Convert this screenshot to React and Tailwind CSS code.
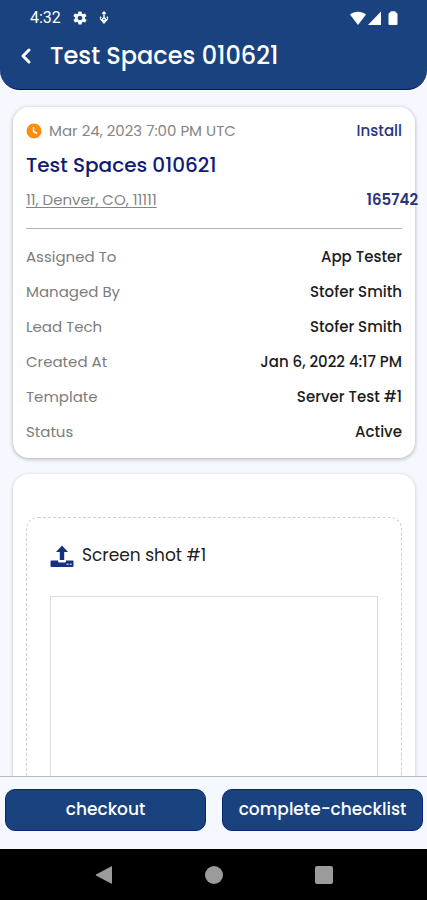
import { ChevronLeft } from 'lucide-react';
import { IoMdSettings } from 'react-icons/io';

const details = [
    { label: 'Assigned To', value: 'App Tester' },
    { label: 'Managed By', value: 'Stofer Smith' },
    { label: 'Lead Tech', value: 'Stofer Smith' },
    { label: 'Created At', value: 'Jan 6, 2022 4:17 PM' },
    { label: 'Template', value: 'Server Test #1' },
    { label: 'Status', value: 'Active' },
];

function StatusBar() {
    return (
        <div className="flex h-9 items-center justify-between pl-[30px] pr-7 font-['Roboto',sans-serif]">
            <div className="flex items-center">
                <span className="text-base">4:32</span>
                <IoMdSettings className="ml-[11px] size-4" />
                <svg className="ml-[10px] h-4 w-3" viewBox="0 0 12 16" fill="none" stroke="currentColor" strokeWidth="1.4">
                    <path d="M6 2v6M4.3 3.7L6 2l1.700 1.700" />
                    <circle cx="6" cy="9.500" r="1.500" />
                    <path d="M2 6.800l1.300 1M10 6.800l-1.300 1M2.200 8.500L6 13l3.800-4.500" />
                </svg>
            </div>
            <div className="flex items-center">
                <svg className="h-4 w-[18px]" viewBox="0 0 18 16" fill="currentColor">
                    <path d="M1 4.5C3.3 2.6 6 1.7 9 1.7s5.7.9 8 2.8L9 15z" />
                </svg>
                <svg className="h-4 w-4" viewBox="0 0 16 16" fill="currentColor">
                    <path d="M14 1.5V15H1z" />
                </svg>
                <svg className="ml-1 h-4 w-3" viewBox="0 0 12 16" fill="currentColor">
                    <path d="M4 1.2h4l2.500 2.600V14a1 1 0 0 1-1 1h-7a1 1 0 0 1-1-1V3.800z" />
                </svg>
            </div>
        </div>
    );
}

function Header() {
    return (
        <header className="h-[90px] shrink-0 rounded-b-[20px] border-b border-[#07107a] bg-[#1a427f] text-white">
            <StatusBar />
            <div className="flex h-10 items-center pl-3">
                <button type="button" aria-label="Back" className="flex size-7 items-center justify-center">
                    <ChevronLeft className="size-6" strokeWidth={3} />
                </button>
                <h1 className="ml-[10px] text-2xl font-medium">Test Spaces 010621</h1>
            </div>
        </header>
    );
}

function JobCard() {
    return (
        <section className="rounded-2xl bg-white px-[13px] pt-3 pb-[14px] text-[15px] leading-6 shadow-[0_1px_4px_rgba(0,0,0,0.3)]">
            <div className="flex items-center justify-between">
                <div className="flex items-center gap-[7px] text-[#858585]">
                    <svg className="size-4" viewBox="0 0 16 16" fill="none">
                        <circle cx="8" cy="8" r="7.5" fill="#fb8c0d" />
                        <path d="M7.5 4v4.5l3.5 2" stroke="white" strokeWidth="1.5" />
                    </svg>
                    <span>Mar 24, 2023 7:00 PM UTC</span>
                </div>
                <span className="font-medium text-[#2a3580]">Install</span>
            </div>
            <h2 className="mt-[10px] text-xl leading-6 font-medium text-[#101c72]">Test Spaces 010621</h2>
            <div className="-mr-4 mt-[11px] flex items-center justify-between">
                <a href="#" className="text-[#858585] underline underline-offset-2">11, Denver, CO, 11111</a>
                <span className="font-semibold text-[#2a3580]">165742</span>
            </div>
            <hr className="mt-4 border-[#b5b5b5]" />
            <dl className="mt-4 flex flex-col gap-[11px]">
                {details.map((item) => (
                    <div key={item.label} className="flex justify-between">
                        <dt className="text-[#7c7c7c]">{item.label}</dt>
                        <dd className="font-medium text-[#1c1c1c]">{item.value}</dd>
                    </div>
                ))}
            </dl>
        </section>
    );
}

function UploadIcon() {
    return (
        <svg className="size-6" viewBox="0 0 24 24" fill="#14307e">
            <path d="M12 1.500l6 6.500h-3.800v8H9.800V8H6z" />
            <path d="M1.500 16.500H8V17q0 1.500 1.500 1.500h5q1.500 0 1.500-1.500v-.5h6.500q1 0 1 1V22q0 1-1 1h-21q-1 0-1-1v-4.500q0-1 1-1z" />
            <path d="M16.500 20.200h2M19.700 20.200h2" stroke="white" strokeWidth="1" />
        </svg>
    );
}

function ScreenshotCard() {
    return (
        <section className="mt-4 rounded-2xl bg-white px-[13px] pt-[43px] pb-6 shadow-[0_1px_4px_rgba(0,0,0,0.2)]">
            <div className="rounded-xl border border-dashed border-[#cfcfcf] px-[23px] pt-6 pb-6">
                <div className="flex h-7 items-center gap-2">
                    <UploadIcon />
                    <h3 className="text-[17px] text-[#222]">Screen shot #1</h3>
                </div>
                <div className="mt-[26px] h-80 border border-[#dcdcdc]" />
            </div>
        </section>
    );
}

function ActionBar() {
    return (
        <footer className="grid shrink-0 grid-cols-2 gap-4 border-t border-[#b9bcc0] pt-3 pr-1 pb-[18px] pl-[5px]">
            <button type="button" className="h-[42px] rounded-[10px] border border-[#0b2576] bg-[#1a427f] text-[17px] font-medium text-white">
                checkout
            </button>
            <button type="button" className="h-[42px] rounded-[10px] border border-[#0b2576] bg-[#1a427f] text-[17px] font-medium text-white">
                complete-checklist
            </button>
        </footer>
    );
}

function NavigationBar() {
    return (
        <nav className="flex h-[51px] shrink-0 items-center justify-center gap-[92px] bg-black text-[#9b9b9b]">
            <button type="button" aria-label="Back">
                <svg className="size-[18px]" viewBox="0 0 18 18" fill="currentColor">
                    <path d="M17 1v16q0 1-1 .5L1 9.5q-.7-.5 0-1L16 .5q1-.5 1 .5z" />
                </svg>
            </button>
            <button type="button" aria-label="Home" className="size-[18px] rounded-full bg-[#9b9b9b]" />
            <button type="button" aria-label="Recent apps" className="size-[18px] rounded-xs bg-[#9b9b9b]" />
        </nav>
    );
}

export default function App() {
    return (
        <div className="flex h-screen flex-col bg-[#f5f8fe] font-['Poppins','Inter',sans-serif]">
            <Header />
            <main className="min-h-0 flex-1 overflow-y-auto pt-[17px] pr-3 pb-4 pl-[13px] [scrollbar-width:none]">
                <JobCard />
                <ScreenshotCard />
            </main>
            <ActionBar />
            <NavigationBar />
        </div>
    );
}
